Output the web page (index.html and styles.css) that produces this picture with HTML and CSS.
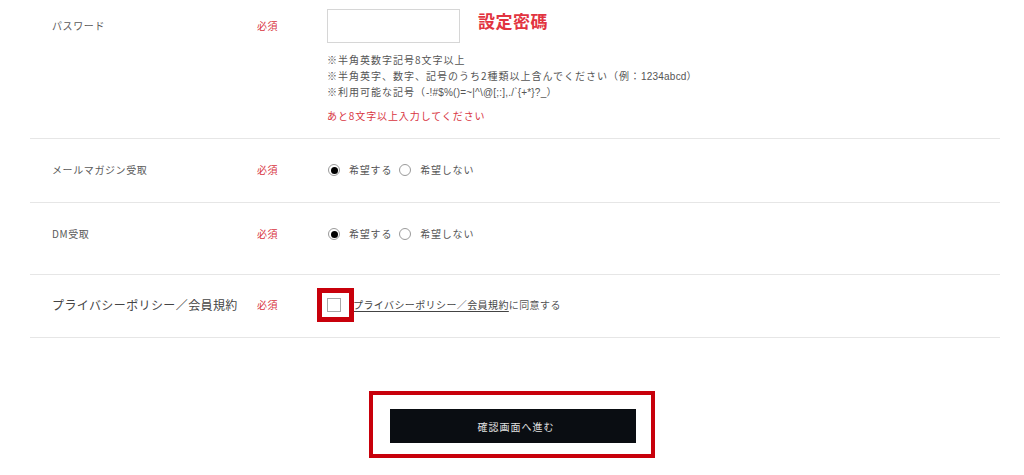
FILE: index.html
```html
<!DOCTYPE html>
<html lang="ja">
<head>
<meta charset="utf-8">
<title>会員登録</title>
<link rel="stylesheet" href="styles.css">
</head>
<body>
<div class="form">
  <div class="row row-password">
    <div class="label label-tall">パスワード</div>
    <div class="req req-tall">必須</div>
    <div class="field">
      <div class="pw-line">
        <div class="pw-input"></div>
        <span class="pw-note">設定密碼</span>
      </div>
      <div class="help">
        <p>※半角英数字記号8文字以上</p>
        <p>※半角英字、数字、記号のうち2種類以上含んでください（例：<span class="ascii">1234abcd</span>）</p>
        <p>※利用可能な記号（<span class="ascii">-!#$%()=~|^\@[;:],./`{+*}?_</span>）</p>
      </div>
      <p class="error">あと8文字以上入力してください</p>
    </div>
  </div>

  <div class="row row-radio">
    <div class="label">メールマガジン受取</div>
    <div class="req">必須</div>
    <div class="field radios">
      <span class="radio checked"></span><span class="opt">希望する</span>
      <span class="radio"></span><span class="opt">希望しない</span>
    </div>
  </div>

  <div class="row row-radio row-dm">
    <div class="label">DM受取</div>
    <div class="req">必須</div>
    <div class="field radios">
      <span class="radio checked"></span><span class="opt">希望する</span>
      <span class="radio"></span><span class="opt">希望しない</span>
    </div>
  </div>

  <div class="row row-privacy">
    <div class="label label-large">プライバシーポリシー／会員規約</div>
    <div class="req">必須</div>
    <div class="field agree">
      <span class="check-wrap"><span class="checkbox"></span><span class="mark-box"></span></span>
      <span class="agree-text"><span class="link">プライバシーポリシー／会員規約</span>に同意する</span>
    </div>
  </div>
</div>

<div class="submit-area">
  <div class="submit-mark">
    <div class="submit-btn">確認画面へ進む</div>
  </div>
</div>
</body>
</html>
```

FILE: styles.css
```css
* { box-sizing: border-box; }

html, body {
  margin: 0;
  padding: 0;
  background: #fff;
}

body {
  font-family: "Noto Sans CJK JP", "Noto Sans", sans-serif;
  color: #555;
  font-size: 10px;
}

p { margin: 0; }

.form {
  margin: 0 24px 0 30px;
}

.row {
  display: grid;
  grid-template-columns: 205px 70px 1fr;
  align-items: start;
  padding-left: 22px;
  border-bottom: 1px solid #e6e6e6;
}

.label {
  font-size: 10px;
  line-height: 16px;
  letter-spacing: 0.6px;
  color: #5a5a5a;
}

.label-large {
  font-size: 12px;
  letter-spacing: 0.4px;
  color: #444;
}

.req {
  font-size: 10px;
  line-height: 16px;
  letter-spacing: 0.5px;
  color: #d8353f;
}

.label-tall, .req-tall { line-height: 34px; }

.row-password {
  padding-top: 9px;
  padding-bottom: 14px;
}

.pw-line {
  display: flex;
  align-items: center;
  gap: 18px;
}

.pw-input {
  width: 133px;
  height: 34px;
  border: 1px solid #d6d6d6;
  background: #fff;
}

.pw-note {
  color: #e23440;
  font-size: 17px;
  font-weight: bold;
  letter-spacing: 0.5px;
  line-height: 20px;
  margin-top: -10px;
}

.help {
  margin-top: 9px;
  font-size: 10px;
  line-height: 16px;
  letter-spacing: 1px;
  color: #555;
}

.help p {
  height: 16px;
  overflow: visible;
}

.ascii {
  font-family: "Liberation Sans", "Noto Sans", sans-serif;
  letter-spacing: 0.2px;
  line-height: 10px;
}

.error {
  margin-top: 8px;
  font-size: 10px;
  line-height: 16px;
  letter-spacing: 0.9px;
  color: #d8353f;
}

.row-radio {
  padding-top: 23px;
  padding-bottom: 24px;
}

.row-dm { padding-bottom: 32px; }

.radios {
  display: flex;
  align-items: center;
  height: 16px;
  padding-left: 1px;
}

.radio {
  width: 12px;
  height: 12px;
  border: 1px solid #9a9a9a;
  border-radius: 50%;
  display: inline-flex;
  align-items: center;
  justify-content: center;
  background: #fff;
}

.radio.checked::after {
  content: "";
  width: 7px;
  height: 7px;
  border-radius: 50%;
  background: #000;
}

.opt {
  margin-left: 9px;
  margin-right: 7px;
  line-height: 16px;
  letter-spacing: 0.8px;
  color: #555;
}

.row-privacy {
  padding-top: 22px;
  padding-bottom: 24px;
}

.agree {
  display: flex;
  align-items: center;
  height: 16px;
}

.check-wrap {
  position: relative;
  width: 14px;
  height: 14px;
  margin-right: 12px;
}

.checkbox {
  display: block;
  width: 14px;
  height: 14px;
  border: 1px solid #a8a8a8;
  background: #fff;
}

.mark-box {
  position: absolute;
  left: -10px;
  top: -10px;
  width: 37px;
  height: 34px;
  border: 5px solid #c8000b;
}

.agree-text {
  line-height: 16px;
  letter-spacing: 0.4px;
  color: #555;
}

.link {
  text-decoration: underline;
  text-underline-offset: 2px;
  color: #444;
}

.submit-area {
  display: flex;
  justify-content: center;
  padding-top: 53px;
}

.submit-mark {
  width: 286px;
  height: 67px;
  border: 4px solid #c8000b;
  padding: 14px 0 0 17px;
}

.submit-btn {
  width: 246px;
  height: 34px;
  background: #0a0d12;
  color: #e0e0e0;
  font-size: 10px;
  letter-spacing: 1px;
  padding-left: 6px;
  display: flex;
  align-items: center;
  justify-content: center;
}
```
